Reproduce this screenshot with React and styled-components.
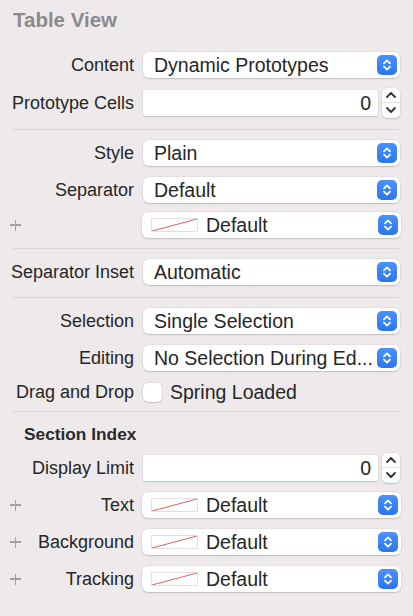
import React from "react"
import styled, { createGlobalStyle } from "styled-components"

const GlobalStyle = createGlobalStyle`
	html, body {
		margin: 0;
		padding: 0;
		background: #eeeaeb;
	}
	body {
		font-family: "Liberation Sans", Arial, sans-serif;
		color: #262626;
	}
`

const StyledPanel = styled.div`
	width: 413px;
	height: 616px;
	background: #eeeaeb;
	overflow: hidden;
`

const StyledTitle = styled.div`
	height: 46px;
	box-sizing: border-box;
	padding: 8px 0 0 13px;
	font-size: 20.5px;
	line-height: 24px;
	font-weight: bold;
	color: #8d8a8b;
`

const StyledSectionTitle = styled.div`
	height: 37px;
	box-sizing: border-box;
	padding: 10px 0 0 24px;
	font-size: 17.3px;
	line-height: 24px;
	font-weight: bold;
	color: #2a2a2a;
`

const StyledGroup = styled.div`
	display: flex;
	flex-direction: column;
	padding: ${p => p.$pad || "0"};
`

const StyledDivider = styled.div`
	height: 1px;
	margin: 0 14px 0 13px;
	background: #dad6d7;
`

const StyledRow = styled.div`
	display: grid;
	grid-template-columns: 134px 1fr;
	column-gap: 9px;
	align-items: center;
	height: ${p => p.$h || 37}px;
	padding-right: 13px;
`

const StyledLabel = styled.div`
	display: flex;
	align-items: center;
	justify-content: ${p => (p.$plus ? "space-between" : "flex-end")};
	padding-left: 10px;
	padding-top: 1px;
	font-size: 18px;
	color: #262626;
	white-space: nowrap;
`

const StyledPlus = styled.span`
	position: relative;
	width: 11px;
	height: 11px;
	&::before, &::after {
		content: "";
		position: absolute;
		background: #a3a0a1;
	}
	&::before {
		left: 0;
		right: 0;
		top: 4.75px;
		height: 1.5px;
	}
	&::after {
		top: 0;
		bottom: 0;
		left: 4.75px;
		width: 1.5px;
	}
`

const StyledPopup = styled.div`
	display: flex;
	align-items: center;
	height: 26px;
	margin: 0 ${p => (p.$wide ? "-1px" : "0")} 0 ${p => (p.$wide ? "-1px" : "0")};
	padding: 0 3px 0 ${p => (p.$wide ? "9px" : "11px")};
	background: #ffffff;
	border-radius: 6px;
	box-shadow: 0 0 0 0.5px rgba(0, 0, 0, 0.07), 0 1px 1.5px rgba(0, 0, 0, 0.16);
	font-size: 19.5px;
	color: #262626;
`

const StyledValue = styled.span`
	flex: 1;
	padding-top: 1px;
	white-space: nowrap;
	overflow: hidden;
`

const StyledBlue = styled.span`
	display: flex;
	align-items: center;
	justify-content: center;
	width: 20px;
	height: 20px;
	border-radius: 5px;
	background: linear-gradient(#4a92fb, #2c76ee);
	flex-shrink: 0;
`

const StyledSwatch = styled.span`
	width: 47px;
	height: 14px;
	margin-right: 8px;
	box-sizing: border-box;
	border: 1px solid #e2dfe0;
	background: #ffffff;
	display: flex;
	flex-shrink: 0;
`

const StyledNumberWrap = styled.div`
	display: grid;
	grid-template-columns: 1fr 18px;
	column-gap: 4px;
	align-items: center;
`

const StyledField = styled.div`
	height: 26px;
	display: flex;
	align-items: center;
	justify-content: flex-end;
	padding: 1px 7px 0 0;
	box-sizing: border-box;
	background: #ffffff;
	border-radius: 2px;
	box-shadow: 0 0 0 0.5px rgba(0, 0, 0, 0.07), 0 1px 1.5px rgba(0, 0, 0, 0.14);
	font-size: 19.5px;
`

const StyledStepper = styled.div`
	height: 30px;
	display: flex;
	flex-direction: column;
	background: #ffffff;
	border-radius: 5px;
	box-shadow: 0 0 0 0.5px rgba(0, 0, 0, 0.08), 0 1px 1.5px rgba(0, 0, 0, 0.14);
`

const StyledStepHalf = styled.span`
	flex: 1;
	display: flex;
	align-items: center;
	justify-content: center;
	border-top: ${p => (p.$bottom ? "1px solid #e4e1e2" : "none")};
`

const StyledCheckRow = styled.div`
	display: flex;
	align-items: center;
	gap: 8px;
	font-size: 19.5px;
	padding-top: 1px;
`

const StyledCheck = styled.span`
	width: 19px;
	height: 19px;
	box-sizing: border-box;
	border-radius: 5px;
	background: #ffffff;
	box-shadow: 0 0 0 0.5px rgba(0, 0, 0, 0.12), 0 1px 1px rgba(0, 0, 0, 0.12);
`

const UpDown = () => (
	<svg width="10" height="14" viewBox="0 0 10 14">
		<path d="M2 5.4 L5 2.4 L8 5.4" fill="none" stroke="#fff" strokeWidth="1.8" strokeLinecap="round" strokeLinejoin="round" />
		<path d="M2 8.6 L5 11.6 L8 8.6" fill="none" stroke="#fff" strokeWidth="1.8" strokeLinecap="round" strokeLinejoin="round" />
	</svg>
)

const Chevron = ({ down }) => (
	<svg width="12" height="8" viewBox="0 0 12 8">
		<path d={down ? "M2 2 L6 6 L10 2" : "M2 6 L6 2 L10 6"} fill="none" stroke="#333" strokeWidth="1.8" strokeLinecap="round" strokeLinejoin="round" />
	</svg>
)

const Popup = ({ children, wide, swatch }) => (
	<StyledPopup $wide={wide}>
		{swatch && (
			<StyledSwatch>
				<svg width="45" height="12" viewBox="0 0 45 12">
					<line x1="0" y1="12" x2="45" y2="0" stroke="#e0605a" strokeWidth="1" />
				</svg>
			</StyledSwatch>
		)}
		<StyledValue>{children}</StyledValue>
		<StyledBlue><UpDown /></StyledBlue>
	</StyledPopup>
)

const NumberField = ({ value }) => (
	<StyledNumberWrap>
		<StyledField>{value}</StyledField>
		<StyledStepper>
			<StyledStepHalf><Chevron /></StyledStepHalf>
			<StyledStepHalf $bottom><Chevron down /></StyledStepHalf>
		</StyledStepper>
	</StyledNumberWrap>
)

const Label = ({ children, plus }) => (
	<StyledLabel $plus={plus}>
		{plus && <StyledPlus />}
		<span>{children}</span>
	</StyledLabel>
)

const App = () => (
	<StyledPanel>
		<GlobalStyle />
		<StyledTitle>Table View</StyledTitle>

		<StyledGroup $pad="0 0 7px 0">
			<StyledRow>
				<Label>Content</Label>
				<Popup>Dynamic Prototypes</Popup>
			</StyledRow>
			<StyledRow $h={39}>
				<Label>Prototype Cells</Label>
				<NumberField value="0" />
			</StyledRow>
		</StyledGroup>
		<StyledDivider />

		<StyledGroup $pad="4px 0 7px 0">
			<StyledRow>
				<Label>Style</Label>
				<Popup>Plain</Popup>
			</StyledRow>
			<StyledRow>
				<Label>Separator</Label>
				<Popup>Default</Popup>
			</StyledRow>
			<StyledRow $h={33}>
				<Label plus />
				<Popup wide swatch>Default</Popup>
			</StyledRow>
		</StyledGroup>
		<StyledDivider />

		<StyledGroup $pad="4px 0 7px 0">
			<StyledRow>
				<Label>Separator Inset</Label>
				<Popup>Automatic</Popup>
			</StyledRow>
		</StyledGroup>
		<StyledDivider />

		<StyledGroup $pad="4px 0 3px 0">
			<StyledRow>
				<Label>Selection</Label>
				<Popup>Single Selection</Popup>
			</StyledRow>
			<StyledRow>
				<Label>Editing</Label>
				<Popup>No Selection During Ed...</Popup>
			</StyledRow>
			<StyledRow $h={32}>
				<Label>Drag and Drop</Label>
				<StyledCheckRow>
					<StyledCheck />
					<span>Spring Loaded</span>
				</StyledCheckRow>
			</StyledRow>
		</StyledGroup>
		<StyledDivider />

		<StyledSectionTitle>Section Index</StyledSectionTitle>
		<StyledGroup>
			<StyledRow>
				<Label>Display Limit</Label>
				<NumberField value="0" />
			</StyledRow>
			<StyledRow>
				<Label plus>Text</Label>
				<Popup wide swatch>Default</Popup>
			</StyledRow>
			<StyledRow>
				<Label plus>Background</Label>
				<Popup wide swatch>Default</Popup>
			</StyledRow>
			<StyledRow>
				<Label plus>Tracking</Label>
				<Popup wide swatch>Default</Popup>
			</StyledRow>
		</StyledGroup>
	</StyledPanel>
)

export default App
